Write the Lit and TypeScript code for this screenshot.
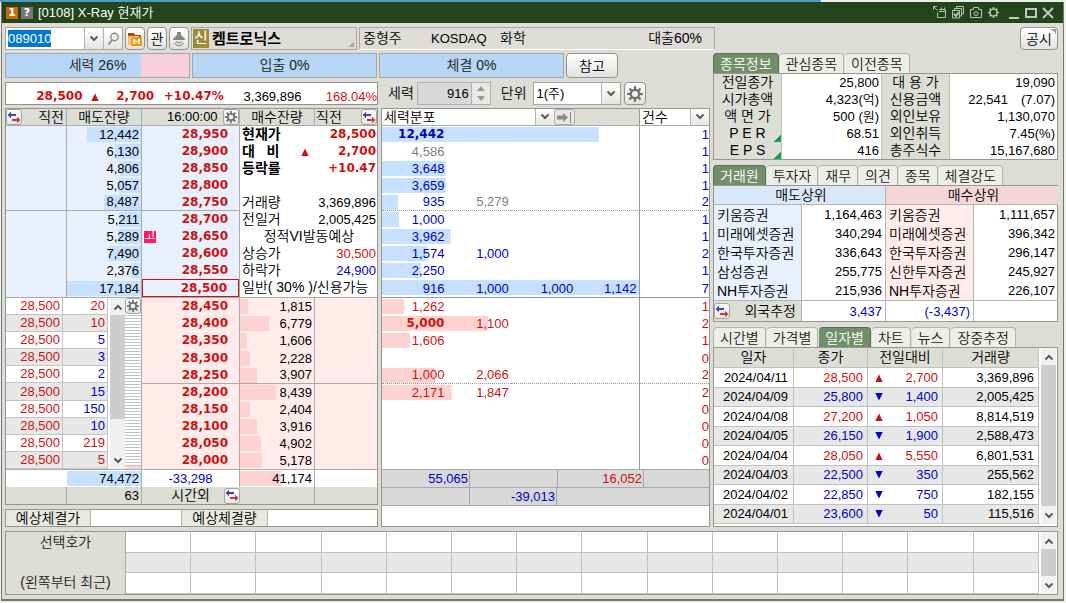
import { LitElement, html, css, svg, nothing } from "lit";
import { customElement, property } from "lit/decorators.js";
import { classMap } from "lit/directives/class-map.js";
import { styleMap } from "lit/directives/style-map.js";

type Side = "up" | "down";

const FULL_VOLUME = 17184;
const FULL_SPREAD = 14740;

const asks: [string, string][] = [
  ["12,442", "28,950"],
  ["6,130", "28,900"],
  ["4,806", "28,850"],
  ["5,057", "28,800"],
  ["8,487", "28,750"],
  ["5,211", "28,700"],
  ["5,289", "28,650"],
  ["7,490", "28,600"],
  ["2,376", "28,550"],
  ["17,184", "28,500"],
];

const bids: [string, string][] = [
  ["28,450", "1,815"],
  ["28,400", "6,779"],
  ["28,350", "1,606"],
  ["28,300", "2,228"],
  ["28,250", "3,907"],
  ["28,200", "8,439"],
  ["28,150", "2,404"],
  ["28,100", "3,916"],
  ["28,050", "4,902"],
  ["28,000", "5,178"],
];

const ticks: [string, Side][] = [
  ["20", "up"],
  ["10", "up"],
  ["5", "down"],
  ["3", "down"],
  ["2", "down"],
  ["15", "down"],
  ["150", "down"],
  ["10", "down"],
  ["219", "up"],
  ["5", "up"],
];

interface Spread {
  cells: string[];
  total: number;
  count: string;
  muted?: number[];
  strong?: boolean;
}

const askSpread: Spread[] = [
  { cells: ["12,442"], total: 12442, count: "1", strong: true },
  { cells: ["4,586"], total: 0, count: "1", muted: [0] },
  { cells: ["3,648"], total: 3648, count: "1" },
  { cells: ["3,659"], total: 3659, count: "1" },
  { cells: ["935", "5,279"], total: 935, count: "2", muted: [1] },
  { cells: ["1,000"], total: 1000, count: "1" },
  { cells: ["3,962"], total: 3962, count: "1" },
  { cells: ["1,574", "1,000"], total: 2574, count: "2" },
  { cells: ["2,250"], total: 2250, count: "1" },
  { cells: ["916", "1,000", "1,000", "1,142"], total: 17184, count: "7" },
];

const bidSpread: Spread[] = [
  { cells: ["1,262"], total: 1262, count: "1" },
  { cells: ["5,000", "1,100"], total: 6100, count: "2", strong: true },
  { cells: ["1,606"], total: 1606, count: "1" },
  { cells: [], total: 0, count: "0" },
  { cells: ["1,000", "2,066"], total: 3066, count: "2" },
  { cells: ["2,171", "1,847"], total: 4018, count: "2" },
  { cells: [], total: 0, count: "0" },
  { cells: [], total: 0, count: "0" },
  { cells: [], total: 0, count: "0" },
  { cells: [], total: 0, count: "0" },
];

const facts: [string, string, string, string][] = [
  ["전일종가", "25,800", "대 용 가", "19,090"],
  ["시가총액", "4,323(억)", "신용금액", "22,541\u2003(7.07)"],
  ["액 면 가", "500 (원)", "외인보유", "1,130,070"],
  ["P E R", "68.51", "외인취득", "7.45(%)"],
  ["E P S", "416", "총주식수", "15,167,680"],
];

const brokers: [string, string, string, string][] = [
  ["키움증권", "1,164,463", "키움증권", "1,111,657"],
  ["미래에셋증권", "340,294", "미래에셋증권", "396,342"],
  ["한국투자증권", "336,643", "한국투자증권", "296,147"],
  ["삼성증권", "255,775", "신한투자증권", "245,927"],
  ["NH투자증권", "215,936", "NH투자증권", "226,107"],
];

const daily: [string, string, Side, string, string][] = [
  ["2024/04/11", "28,500", "up", "2,700", "3,369,896"],
  ["2024/04/09", "25,800", "down", "1,400", "2,005,425"],
  ["2024/04/08", "27,200", "up", "1,050", "8,814,519"],
  ["2024/04/05", "26,150", "down", "1,900", "2,588,473"],
  ["2024/04/04", "28,050", "up", "5,550", "6,801,531"],
  ["2024/04/03", "22,500", "down", "350", "255,562"],
  ["2024/04/02", "22,850", "down", "750", "182,155"],
  ["2024/04/01", "23,600", "down", "50", "115,516"],
];

const toNumber = (text: string) => Number(text.replace(/,/g, ""));
const barWidth = (value: string) => `${Math.min(100, (toNumber(value) / FULL_VOLUME) * 100)}%`;

const base = css`
  * {
    box-sizing: border-box;
  }
  button,
  input,
  select {
    font: inherit;
    color: inherit;
    margin: 0;
    padding: 0;
    border: 0;
    border-radius: 0;
    background: none;
    outline: none;
    appearance: none;
    min-width: 0;
  }
  svg {
    display: block;
  }
`;

const chevron = (up = false) => html`<svg width="10" height="8" viewBox="0 0 10 8" aria-hidden="true">
  <path d=${up ? "M1.5 6.5 5 3 8.5 6.5" : "M1.5 1.5 5 5 8.5 1.5"} fill="none" stroke="#5c5c5c" stroke-width="2" />
</svg>`;

const gear = (small = false) => {
  const teeth = [0, 45, 90, 135, 180, 225, 270, 315];
  const size = small ? 14 : 18;
  return html`<svg width=${size} height=${size} viewBox="0 0 16 16" aria-hidden="true">
    ${teeth.map((a) => svg`<rect x="7" y="1" width="2" height="4" fill="#707070" transform="rotate(${a} 8 8)" />`)}
    <circle cx="8" cy="8" r="3.7" fill="#f4f4f4" stroke="#707070" stroke-width="2" />
  </svg>`;
};

const swap = () => html`<svg width="14" height="13" viewBox="0 0 14 13" aria-hidden="true">
  <path d="M0.5 4 4 0.8V3H9V5H4V7.2Z" fill="#3d43b8" />
  <path d="M13.5 9 10 5.8V8H5V10H10V12.2Z" fill="#c43a3a" />
</svg>`;

const marker = (side: Side) => html`<svg class="marker" width="8" height="8" viewBox="0 0 8 8" role="img" aria-label=${side === "up" ? "상승" : "하락"}>
  ${side === "up"
    ? svg`<path d="M4 0.5 7.7 8H0.3Z" fill="#d01010" />`
    : svg`<path d="M0.3 0H7.7L4 7.5Z" fill="#0000d0" />`}
</svg>`;

@customElement("tab-strip")
class TabStrip extends LitElement {
  @property({ type: Array }) tabs: string[] = [];
  @property({ type: Number }) active = 0;

  static styles = [
    base,
    css`
      :host {
        display: block;
      }
      .strip {
        display: flex;
        gap: 1px;
        height: 20px;
      }
      .tab {
        height: 20px;
        padding: 0 6px;
        border: 1px solid #b0b4ac;
        border-bottom: 0;
        border-left-width: 0;
        border-radius: 4px 4px 0 0;
        background: #ebefe8;
        color: #222;
        font-size: 14px;
        line-height: 18px;
        white-space: nowrap;
      }
      .tab:first-child {
        border-left-width: 1px;
      }
      .tab.on {
        background: #71906a;
        border-color: #5d6b58;
        color: #fff;
      }
    `,
  ];

  render() {
    return html`<div class="strip" role="tablist">
      ${this.tabs.map(
        (label, i) => html`<button
          role="tab"
          aria-selected=${i === this.active}
          class=${classMap({ tab: true, on: i === this.active })}
          @click=${() => (this.active = i)}
        >${label}</button>`,
      )}
    </div>`;
  }
}

@customElement("scroll-rail")
class ScrollRail extends LitElement {
  @property({ type: Number }) thumb = 50;

  static styles = [
    base,
    css`
      :host {
        display: flex;
        flex-direction: column;
        width: 15px;
        flex: none;
        background: #f0f0f0;
      }
      .step {
        height: 17px;
        display: grid;
        place-items: center;
        flex: none;
      }
      .lane {
        flex: 1;
        min-height: 0;
      }
      .thumb {
        background: #cdcdcd;
      }
    `,
  ];

  render() {
    return html`<button class="step" aria-label="위로">${chevron(true)}</button>
      <div class="lane"><div class="thumb" style=${styleMap({ height: `${this.thumb}%` })}></div></div>
      <button class="step" aria-label="아래로">${chevron()}</button>`;
  }
}

@customElement("app-root")
class AppRoot extends LitElement {
  static styles = [
    base,
    css`
      :host {
        display: block;
        min-height: 100vh;
        padding: 2px 2px 0 1px;
        background: linear-gradient(#4a9ccc, #4a9ccc) no-repeat 0 0 / 77% 2px, #eef0ee;
        font-family: "Liberation Sans", "Noto Sans CJK KR", sans-serif;
        font-size: 13px;
        font-weight: 350;
        line-height: 17px;
        color: #000;
        box-sizing: border-box;
      }
      .window {
        border: 1px solid #75776f;
        border-top: 0;
        border-bottom-width: 2px;
        background: #dddcd6;
      }
      .title {
        display: flex;
        align-items: center;
        gap: 3px;
        height: 21px;
        padding: 0 8px 0 4px;
        background: #24441b;
        color: #fff;
      }
      .title-text {
        flex: 1;
        margin: 0 0 0 2px;
        font-size: 13px;
        font-weight: inherit;
      }
      .chip {
        width: 12px;
        height: 12px;
        background: #c66a08;
        font: bold 11px/12px "DejaVu Sans", sans-serif;
        text-align: center;
      }
      .chip.help {
        background: #777;
      }
      .tool {
        display: grid;
        place-items: center;
        width: 15px;
        height: 17px;
      }
      .body {
        padding: 4px 5px 4px 3px;
      }
      .ko {
        font-size: 14px;
      }
      .up {
        color: #d01010;
      }
      .down {
        color: #0000c8;
      }
      .muted {
        color: #808080;
      }
      .strong {
        font: bold 12px/17px "DejaVu Sans", sans-serif;
      }
      .num {
        text-align: right;
      }

      .toolbar {
        display: flex;
        gap: 2px;
        height: 23px;
        margin-bottom: 3px;
      }
      .combo {
        display: flex;
        border: 1px solid #a6a6a2;
        background: #fff;
      }
      .code {
        width: 78px;
        padding-left: 2px;
      }
      .code::selection {
        background: #0078d7;
        color: #fff;
      }
      .arrow {
        display: grid;
        place-items: center;
        width: 19px;
        flex: none;
        border-left: 1px solid #b4b4b0;
        background: linear-gradient(#fff, #e4e4e2);
      }
      .btn {
        display: grid;
        place-items: center;
        border: 1px solid #92928e;
        border-radius: 4px;
        background: linear-gradient(#fff, #e2e2e0);
        font-size: 14px;
        line-height: 18px;
      }
      .square {
        width: 20px;
      }
      .stockname {
        display: flex;
        align-items: center;
        gap: 3px;
        width: 166px;
        padding: 0 1px;
        border: 1px solid #a6a6a2;
        font-size: 15px;
        font-weight: bold;
        background: linear-gradient(135deg, transparent 50%, #a8a8a4 50%) no-repeat right 2px bottom 2px / 5px 5px;
      }
      .credit {
        width: 16px;
        height: 19px;
        background: #9a8c34;
        color: #fff;
        font-size: 15px;
        font-weight: 400;
        line-height: 18px;
        text-align: center;
      }
      .market {
        display: flex;
        align-items: center;
        width: 356px;
        padding: 0 12px 0 3px;
        border: 1px solid #a6a6a2;
        border-bottom-color: #fff;
        font-size: 14px;
      }
      .market-size {
        width: 68px;
      }
      .market-name {
        width: 69px;
        font-size: 13px;
      }
      .market-loan {
        margin-left: auto;
      }
      .notice {
        width: 38px;
        margin-left: auto;
        background: linear-gradient(225deg, #a0a09c 50%, transparent 50%) no-repeat right 1px top 1px / 5px 5px,
          linear-gradient(#fff, #e2e2e0);
      }

      .desk {
        display: grid;
        grid-template-columns: minmax(0, 705fr) minmax(0, 345fr);
        gap: 3px;
      }
      .gauges {
        display: grid;
        grid-template-columns: 185fr 185fr 185fr 52fr 90fr;
        gap: 2px;
        height: 25px;
        margin-bottom: 4px;
      }
      .gauge {
        border: 1px solid #a6a6a2;
        background: #b7d5f4;
        color: #222;
        font-size: 14px;
        line-height: 22px;
        text-align: center;
      }
      .gauge.split {
        background: linear-gradient(90deg, #b7d5f4 74%, #f5d0dc 74%);
      }

      .books {
        display: grid;
        grid-template-columns: minmax(0, 373fr) minmax(0, 329fr);
        column-gap: 3px;
        row-gap: 3px;
      }
      .quote {
        display: grid;
        grid-template-columns: 77fr 24fr 48fr 70fr 78fr 76fr;
        align-items: center;
        height: 23px;
        padding-top: 5px;
        border: 1px solid #8f8f8b;
        background: #fff;
        text-align: right;
      }
      .quote .marker {
        margin: 0 auto;
      }
      .settings {
        display: flex;
        align-items: center;
        height: 23px;
        padding-left: 7px;
      }
      .settings label {
        font-size: 14px;
      }
      .amount {
        display: flex;
        height: 23px;
        margin: 0 10px 0 3px;
        border: 1px solid #b0b0ac;
        background: #d8d8d8;
      }
      .amount input {
        width: 53px;
        padding-right: 2px;
        text-align: right;
      }
      .spin {
        display: grid;
        width: 19px;
        border-left: 1px solid #b0b0ac;
        background: #e8e8e6;
      }
      .spin button {
        display: grid;
        place-items: center;
      }
      .unit {
        height: 23px;
        margin: 0 3px 0 6px;
      }
      .unit select {
        width: 67px;
        padding-left: 3px;
      }
      .settings .btn {
        width: 22px;
        height: 23px;
      }

      .panel {
        border: 1px solid #96968f;
        background: #fff;
      }
      table {
        width: 100%;
        table-layout: fixed;
        border-collapse: separate;
        border-spacing: 0;
      }
      th,
      td {
        padding: 0;
        height: 17px;
        font-weight: inherit;
        white-space: nowrap;
      }
      td.strong {
        font-weight: bold;
      }
      .head th {
        border-bottom: 1px solid #aaa;
        background: #dcddd4;
        font-size: 14px;
        line-height: 16px;
      }
      .line {
        border-right: 1px solid #aaa;
      }
      .ladder .c1 {
        width: 61px;
      }
      .ladder .c2,
      .ladder .c4 {
        width: 75px;
      }
      .ladder .c3 {
        width: 98px;
      }
      .ladder .c5 {
        width: 62px;
      }
      .split-head {
        display: flex;
        align-items: center;
        justify-content: space-between;
        height: 16px;
        padding-right: 2px;
      }
      .split-head.tail {
        padding: 0 0 0 1px;
      }
      .mini {
        display: grid;
        place-items: center;
        width: 16px;
        height: 16px;
        border: 1px solid #a4a4a0;
        border-radius: 3px;
        background: linear-gradient(#fff, #e6e6e4);
        flex: none;
      }
      .clock {
        font-size: 13px;
        padding-left: 24px;
      }
      .ask td {
        background-color: #e8f0fc;
      }
      .bid td {
        background-color: #ffecea;
      }
      .ask:nth-child(5) td:not(.info),
      .bid:nth-child(5) .rule {
        border-bottom: 1px solid #aaa;
      }
      .ask:nth-child(10) td {
        height: 19px;
        border-bottom: 1px solid #aaa;
      }
      .bid:nth-child(4) td {
        height: 18px;
      }
      .ladder .info {
        background: #fff;
        vertical-align: top;
        border-bottom: 1px solid #aaa;
      }
      .ladder .ticks {
        background: #fff;
        vertical-align: top;
      }
      .vol {
        display: grid;
        justify-items: end;
      }
      .vol > * {
        grid-area: 1 / 1;
      }
      .fill {
        height: 15px;
        margin-top: 1px;
        background: #c6e0ff;
      }
      .fill.buy {
        justify-self: start;
        background: #ffd2d2;
      }
      .vol-text {
        padding-right: 2px;
        z-index: 1;
      }
      .price {
        display: flex;
        justify-content: space-between;
        align-items: center;
        height: 17px;
        padding: 0 11px 0 2px;
      }
      .price.last {
        height: 18px;
        border: 1px solid #d01010;
      }
      tr:nth-child(5) .price {
        height: 16px;
      }
      tr:nth-child(5) .vol,
      tr:nth-child(5) .price .strong {
        line-height: 16px;
      }
      .price .strong {
        margin-left: auto;
      }
      .flag {
        width: 12px;
        height: 12px;
        background: #ff1a62;
        color: #fff;
        font-size: 12px;
        font-weight: 400;
        line-height: 10px;
        text-align: center;
      }
      .info-row {
        display: flex;
        align-items: center;
        justify-content: space-between;
        height: 17px;
        padding: 0 1px 0 2px;
      }
      .info-row b {
        font-size: 14px;
        font-weight: 700;
        white-space: pre;
      }
      .info-row .marker {
        margin-right: 8px;
      }
      .info-row .center {
        margin: 0 auto;
        font-size: 14px;
      }
      .tick-wrap {
        display: flex;
        height: 171px;
      }
      .tick-list {
        flex: 1;
        height: 171px;
      }
      .tick-list td {
        border-bottom: 1px solid #c4c4c4;
        border-right: 1px solid #c4c4c4;
        padding-right: 2px;
        line-height: 16px;
        background: #fff;
      }
      .tick-list tr:nth-child(even) td {
        background: #e7e7e7;
      }
      .tick-list .t1 {
        width: 57px;
      }
      .tick-list .t2 {
        width: 45px;
      }
      .tick-wrap scroll-rail {
        margin-left: 2px;
      }
      .stripes {
        display: flex;
        flex-direction: column;
        width: 17px;
        border-right: 1px solid #aaa;
        background: linear-gradient(#ffd0d4, #ffd0d4) no-repeat 0 100% / 100% 3px,
          repeating-linear-gradient(#fff 0 2px, #c4c4c4 2px 3px);
      }
      .sum td {
        height: 18px;
        border-top: 1px solid #aaa;
        background: #fff;
      }
      .after td {
        background: #dcddd4;
      }
      .mid {
        text-align: center;
      }
      .after-cell {
        display: flex;
        align-items: center;
        justify-content: flex-end;
        gap: 14px;
        height: 17px;
        font-size: 14px;
      }
      .expect {
        display: grid;
        grid-template-columns: 85fr 91fr 86fr 109fr;
        height: 18px;
        margin: 4px 0 0;
        line-height: 16px;
      }
      .expect dt {
        background: #e9e9e2;
        border-right: 1px solid #b4b4b0;
        font-size: 14px;
        text-align: center;
      }
      .expect dd {
        margin: 0;
        border-right: 1px solid #b4b4b0;
      }
      .expect dd:last-child {
        border-right: 0;
      }

      .spread-panel {
        display: flex;
        flex-direction: column;
      }
      .spread-head {
        display: flex;
        height: 17px;
        border-bottom: 1px solid #aaa;
        background: #dcddd4;
        line-height: 16px;
        font-size: 14px;
      }
      .pick {
        display: flex;
        background: #fff;
      }
      .pick select {
        flex: 1;
        padding-left: 2px;
        line-height: 16px;
      }
      .pick.wide {
        flex: 172;
      }
      .pick.thin {
        flex: 69;
      }
      .jump {
        display: grid;
        place-items: center;
        width: 21px;
        border: 1px solid #b0b0ac;
        border-radius: 3px;
        background: #e6e6e4;
      }
      .void {
        flex: 64;
        border-right: 1px solid #999;
      }
      .spread .s {
        width: 64px;
      }
      .spread .n {
        width: 69px;
      }
      .spread tr {
        --tone: #c6e0ff;
        background: linear-gradient(var(--tone), var(--tone)) no-repeat 0 1px / var(--bar) 15px;
      }
      .spread .buy {
        --tone: #ffd2d2;
      }
      .spread td {
        padding-right: 2px;
        text-align: right;
      }
      .spread td:nth-child(4) {
        border-right: 1px solid #999;
      }
      .spread td:last-child {
        padding-right: 0;
      }
      .spread tr:nth-child(10) td {
        height: 19px;
        border-bottom: 1px solid #999;
      }
      .spread tr:nth-child(14) td {
        height: 18px;
      }
      .spread tr:nth-child(5) td,
      .spread tr:nth-child(15) td {
        border-bottom: 1px dotted #999;
        line-height: 16px;
      }
      .net {
        display: grid;
        grid-template-columns: 88fr 87fr 87fr 65fr;
        grid-auto-rows: 18px;
        border-top: 1px solid #a8a8a8;
        background: #d8d8d8;
        text-align: right;
      }
      .net div {
        border-bottom: 1px solid #a8a8a8;
        padding-right: 1px;
      }
      .net .box {
        border-right: 1px solid #a8a8a8;
      }
      .net .boxed {
        border-left: 1px solid #a8a8a8;
      }

      .facts .f1,
      .facts .f3 {
        width: 68px;
      }
      .facts .f2 {
        width: 100px;
      }
      .facts .f4 {
        width: 107px;
      }
      .facts th {
        background: #dcddd4;
        border-right: 1px solid #c2c2bc;
        font-size: 14px;
      }
      .facts td {
        padding-right: 2px;
        text-align: right;
      }
      .facts .line {
        border-color: #c2c2bc;
      }
      .facts .more {
        background: linear-gradient(135deg, transparent 50%, #10a450 50%) no-repeat right bottom / 7px 7px, #dcddd4;
      }
      .block {
        margin-bottom: 5px;
      }
      .brokers .b1,
      .brokers .b3 {
        width: 88px;
      }
      .brokers .b2,
      .brokers .b4 {
        width: 84px;
      }
      .brokers th {
        height: 19px;
        text-align: left;
        font-size: 14px;
        padding-left: 3px;
        line-height: 18px;
      }
      .brokers td {
        height: 19px;
        padding-right: 3px;
        text-align: right;
        border-right: 1px solid #b4b4b4;
      }
      .brokers td:last-child {
        border-right: 0;
      }
      .brokers .sell {
        background: #e8f0fc;
        border-right: 1px solid #b4b4b4;
      }
      .brokers .buy {
        background: #ffecea;
        border-right: 1px solid #b4b4b4;
      }
      .brokers thead th {
        text-align: center;
        border-bottom: 1px solid #b4b4b4;
      }
      .brokers thead .sell {
        background: #d8e8f8;
      }
      .brokers thead .buy {
        background: #f5d6d8;
        border-right: 0;
      }
      .brokers tfoot th,
      .brokers tfoot td {
        height: 21px;
        border-top: 1px solid #b4b4b4;
      }
      .brokers tfoot th {
        padding: 0 5px 0 0;
        background: #dcddd4;
        border-right: 1px solid #b4b4b4;
      }
      .foreign {
        display: flex;
        align-items: center;
        justify-content: space-between;
      }
      .scroller {
        display: flex;
        gap: 2px;
        padding: 0 1px 2px 0;
      }
      .daily .d1 {
        width: 80px;
      }
      .daily .d2 {
        width: 74px;
      }
      .daily .d3 {
        width: 75px;
      }
      .daily .d4 {
        width: 96px;
      }
      .daily th,
      .daily td {
        height: 20px;
        border-right: 1px solid #c0c0c0;
        border-bottom: 1px solid #c0c0c0;
        line-height: 19px;
      }
      .daily tr:nth-child(even) td {
        height: 19px;
        background: #e7e7e7;
        line-height: 18px;
      }
      .daily td {
        padding-right: 4px;
        text-align: right;
      }
      .daily td:first-child {
        padding-right: 5px;
      }
      .change {
        display: flex;
        align-items: center;
        justify-content: space-between;
        padding-left: 7px;
      }
      .choices {
        display: flex;
        gap: 2px;
        margin-top: 4px;
        padding-right: 1px;
        height: 64px;
      }
      .choices .h {
        width: 120px;
      }
      .choices th {
        background: #dddcd6;
        border-right: 1px solid #aaa;
        color: #222;
        font-size: 14px;
        vertical-align: top;
      }
      .choice-labels {
        display: flex;
        flex-direction: column;
        justify-content: space-between;
        height: 61px;
        padding: 2px 0;
      }
      .choices td {
        height: 20px;
        border-right: 1px solid #c0c0c0;
        border-bottom: 1px solid #c0c0c0;
      }
      .choices tr:nth-child(2) td {
        background: #e7e7e7;
      }
    `,
  ];

  firstUpdated() {
    const code = this.renderRoot.querySelector<HTMLInputElement>(".code");
    code?.focus({ preventScroll: true });
    code?.select();
  }

  private titleBar() {
    return html`<header class="title">
      <span class="chip">1</span><span class="chip help">?</span>
      <h1 class="title-text">[0108] X-Ray 현재가</h1>
      <button class="tool" aria-label="분리">
        <svg width="14" height="13" viewBox="0 0 14 13" fill="none" stroke="#b9bfb4">
          <path d="M4.5 6.5V11.5H12.5V3.5H6M6 5.5H12.5M8.5 1.5V3M11.5 1.5V3M1 1 4.5 4.5M0.5 4V0.5H4" />
        </svg>
      </button>
      <button class="tool" aria-label="복사">
        <svg width="14" height="13" viewBox="0 0 14 13" fill="none" stroke="#b9bfb4">
          <path d="M1.5 4.5H8.5V12H1.5ZM3.5 4.5V2.5H10.5V10H8.5M5.5 2.5V0.5H12.5V8H10.5" />
          <path d="M3 7.5 5 10 8 6" stroke-width="2" />
        </svg>
      </button>
      <button class="tool" aria-label="화면 저장">
        <svg width="14" height="13" viewBox="0 0 14 13" fill="none" stroke="#b9bfb4">
          <path d="M1.5 3.5H4.5V1.5H9.5V3.5H12.5V11.5H1.5Z" /><circle cx="7" cy="7.5" r="2" />
        </svg>
      </button>
      <button class="tool" aria-label="설정">
        <svg width="13" height="13" viewBox="0 0 13 13" fill="none" stroke="#b9bfb4">
          <circle cx="6.5" cy="6.5" r="3.5" stroke-width="1.6" />
          <path d="M6.5 1V3M6.5 10V12M1 6.5H3M10 6.5H12M2.6 2.6 4 4M9 9 10.4 10.4M2.6 10.4 4 9M9 4 10.4 2.6" stroke-width="1.6" />
        </svg>
      </button>
      <button class="tool" aria-label="최소화">
        <svg width="14" height="12" viewBox="0 0 14 12"><path d="M4 11H14" stroke="#c2c8be" stroke-width="2" /></svg>
      </button>
      <button class="tool" aria-label="최대화">
        <svg width="14" height="12" viewBox="0 0 14 12"><path d="M3 2H13V10H3Z" fill="none" stroke="#c2c8be" stroke-width="2" /></svg>
      </button>
      <button class="tool" aria-label="닫기">
        <svg width="12" height="12" viewBox="0 0 12 12"><path d="M1 1 11 11M11 1 1 11" stroke="#c2c8be" stroke-width="2" /></svg>
      </button>
    </header>`;
  }

  private toolbar() {
    return html`<div class="toolbar">
      <div class="combo">
        <input class="code" aria-label="종목코드" .value=${"089010"} />
        <button class="arrow" aria-label="목록">${chevron()}</button>
        <button class="arrow" aria-label="종목 검색">
          <svg width="13" height="14" viewBox="0 0 13 14" fill="none" stroke="#8c8c86">
            <circle cx="7.5" cy="5" r="3.7" stroke-width="1.4" /><path d="M5 8 1.5 12.5" stroke-width="2" />
          </svg>
        </button>
      </div>
      <button class="btn square" aria-label="보유종목">
        <svg width="16" height="16" viewBox="0 0 16 16">
          <path d="M1 2H7L8 4H14V8H1Z" fill="#a85008" /><path d="M1 5H12V14H2Q1 14 1 13Z" fill="#f0c27a" />
          <path d="M4 6H15V14Q15 15 14 15H4Z" fill="#f59a10" /><path d="M7 8V13M12 8V13M7 10.5H12" stroke="#fff" stroke-width="1.6" />
        </svg>
      </button>
      <button class="btn square">관</button>
      <button class="btn square" aria-label="알림">
        <svg width="14" height="16" viewBox="0 0 14 16" fill="none" stroke="#99998f">
          <path d="M5 1H9V4L13 8V9H1V8L5 4Z" fill="#88887e" stroke="none" /><path d="M4 10.5Q7 13 10 10.5M2.5 12Q7 17.5 11.5 12" stroke-width="1.3" />
        </svg>
      </button>
      <div class="stockname"><span class="credit">신</span>켐트로닉스</div>
      <div class="market">
        <span class="market-size">중형주</span><span class="market-name">KOSDAQ</span><span>화학</span>
        <span class="market-loan">대출60%</span>
      </div>
      <button class="btn notice">공시</button>
    </div>`;
  }

  private askRow([volume, price]: [string, string], i: number) {
    const last = i === asks.length - 1;
    return html`<tr class="ask">
      <td class="line"></td>
      <td class="line">
        <div class="vol"><div class="fill" style=${styleMap({ width: barWidth(volume) })}></div><span class="vol-text">${volume}</span></div>
      </td>
      <td class="line">
        <div class=${classMap({ price: true, last })}>
          ${i === 6 ? html`<span class="flag">고</span>` : nothing}<span class="strong up">${price}</span>
        </div>
      </td>
      ${i === 0 ? html`<td class="info" colspan="2" rowspan="10">${this.info()}</td>` : nothing}
    </tr>`;
  }

  private info() {
    return html`
      <div class="info-row"><b>현재가</b><span class="strong up">28,500</span></div>
      <div class="info-row"><b>대   비</b>${marker("up")}<span class="strong up">2,700</span></div>
      <div class="info-row"><b>등락률</b><span class="strong up">+10.47</span></div>
      <div class="info-row"></div>
      <div class="info-row"><span class="ko">거래량</span><span>3,369,896</span></div>
      <div class="info-row"><span class="ko">전일거</span><span>2,005,425</span></div>
      <div class="info-row"><span class="center">정적VI발동예상</span></div>
      <div class="info-row"><span class="ko">상승가</span><span class="up">30,500</span></div>
      <div class="info-row"><span class="ko">하락가</span><span class="down">24,900</span></div>
      <div class="info-row"><span class="ko">일반( 30% )/신용가능</span></div>
    `;
  }

  private tickList() {
    return html`<div class="tick-wrap">
      <table class="tick-list">
        <colgroup><col class="t1" /><col class="t2" /></colgroup>
        <tbody>
          ${ticks.map(([qty, side]) => html`<tr><td class="num up">28,500</td><td class="num ${side}">${qty}</td></tr>`)}
        </tbody>
      </table>
      <scroll-rail .thumb=${76}></scroll-rail>
      <div class="stripes"><button class="mini" aria-label="체결 설정">${gear(true)}</button></div>
    </div>`;
  }

  private ladder() {
    return html`<div>
      <div class="panel">
        <table class="ladder">
          <colgroup><col class="c1" /><col class="c2" /><col class="c3" /><col class="c4" /><col class="c5" /></colgroup>
          <thead class="head">
            <tr>
              <th class="line"><div class="split-head"><button class="mini" aria-label="전환">${swap()}</button>직전</div></th>
              <th class="line">매도잔량</th>
              <th class="line"><div class="split-head tail"><span class="clock">16:00:00</span><button class="mini" aria-label="호가 설정">${gear(true)}</button></div></th>
              <th class="line">매수잔량</th>
              <th><div class="split-head tail">직전<button class="mini" aria-label="전환">${swap()}</button></div></th>
            </tr>
          </thead>
          <tbody>${asks.map((row, i) => this.askRow(row, i))}</tbody>
          <tbody>
            ${bids.map(
              ([price, volume], i) => html`<tr class="bid">
                ${i === 0 ? html`<td class="ticks" colspan="2" rowspan="10">${this.tickList()}</td>` : nothing}
                <td class="line rule"><div class="price"><span class="strong up">${price}</span></div></td>
                <td class="line rule">
                  <div class="vol"><div class="fill buy" style=${styleMap({ width: barWidth(volume) })}></div><span class="vol-text">${volume}</span></div>
                </td>
                <td class="rule"></td>
              </tr>`,
            )}
          </tbody>
          <tfoot>
            <tr class="sum">
              <td></td>
              <td class="line"><div class="vol"><div class="fill" style=${styleMap({ width: "100%" })}></div><span class="vol-text">74,472</span></div></td>
              <td class="line mid down">-33,298</td>
              <td class="line"><div class="vol"><div class="fill buy" style=${styleMap({ width: "55%" })}></div><span class="vol-text">41,174</span></div></td>
              <td></td>
            </tr>
            <tr class="after">
              <td class="line"></td>
              <td class="line"><div class="vol"><span class="vol-text">63</span></div></td>
              <td><div class="after-cell">시간외<button class="mini" aria-label="시간외 전환">${swap()}</button></div></td>
              <td class="line"></td>
              <td></td>
            </tr>
          </tfoot>
        </table>
      </div>
      <dl class="panel expect"><dt>예상체결가</dt><dd></dd><dt>예상체결량</dt><dd></dd></dl>
    </div>`;
  }

  private spreadRow(row: Spread, side: Side) {
    const bar = Math.min(1, row.total / FULL_SPREAD) * (257 / 327) * 100;
    return html`<tr class=${side === "up" ? "buy" : "sell"} style=${styleMap({ "--bar": `${bar}%` })}>
      ${[0, 1, 2, 3].map(
        (i) => html`<td class=${classMap({ [side]: !row.muted?.includes(i), muted: !!row.muted?.includes(i), strong: !!row.strong && i === 0 })}>${row.cells[i] ?? ""}</td>`,
      )}
      <td class=${side}>${row.count}</td>
    </tr>`;
  }

  private spread() {
    return html`<div class="panel spread-panel">
      <div class="spread-head">
        <div class="pick wide"><select aria-label="분포 기준"><option>세력분포</option></select><span class="arrow">${chevron()}</span></div>
        <button class="jump" aria-label="끝으로">
          <svg width="17" height="11" viewBox="0 0 17 11"><path d="M1 3.5H7V1L12 5.5 7 10V7.5H1Z" fill="#8a8a86" /><path d="M14.5 0V11" stroke="#8a8a86" /></svg>
        </button>
        <div class="void"></div>
        <div class="pick thin"><select aria-label="표시 값"><option>건수</option></select><span class="arrow">${chevron()}</span></div>
      </div>
      <table class="spread">
        <colgroup><col class="s" /><col class="s" /><col class="s" /><col class="s" /><col class="n" /></colgroup>
        <tbody>
          ${askSpread.map((r) => this.spreadRow(r, "down"))}${bidSpread.map((r) => this.spreadRow(r, "up"))}
        </tbody>
      </table>
      <div class="net">
        <div class="box down">55,065</div><div></div><div class="box boxed up">16,052</div><div></div>
        <div class="box"></div><div class="box down">-39,013</div><div></div><div></div>
      </div>
    </div>`;
  }

  private stockFacts() {
    return html`<tab-strip .tabs=${["종목정보", "관심종목", "이전종목"]}></tab-strip>
      <div class="panel block">
        <table class="facts">
          <colgroup><col class="f1" /><col class="f2" /><col class="f3" /><col class="f4" /></colgroup>
          <tbody>
            ${facts.map(
              ([a, b, c, d], i) => html`<tr>
                <th class=${classMap({ more: i > 2 })}>${a}</th><td class="line">${b}</td><th>${c}</th><td>${d}</td>
              </tr>`,
            )}
          </tbody>
        </table>
      </div>`;
  }

  private brokerTable() {
    return html`<tab-strip .tabs=${["거래원", "투자자", "재무", "의견", "종목", "체결강도"]}></tab-strip>
      <div class="panel block">
        <table class="brokers">
          <colgroup><col class="b1" /><col class="b2" /><col class="b3" /><col class="b4" /></colgroup>
          <thead><tr><th class="sell" colspan="2">매도상위</th><th class="buy" colspan="2">매수상위</th></tr></thead>
          <tbody>
            ${brokers.map(([a, b, c, d]) => html`<tr><th class="sell">${a}</th><td>${b}</td><th class="buy">${c}</th><td>${d}</td></tr>`)}
          </tbody>
          <tfoot>
            <tr>
              <th><div class="foreign"><button class="mini" aria-label="외국계 전환">${swap()}</button>외국추정</div></th>
              <td class="down">3,437</td><td class="down">(-3,437)</td><td></td>
            </tr>
          </tfoot>
        </table>
      </div>`;
  }

  private dailyTable() {
    return html`<tab-strip .tabs=${["시간별", "가격별", "일자별", "차트", "뉴스", "장중추정"]} .active=${2}></tab-strip>
      <div class="panel scroller">
        <table class="daily">
          <colgroup><col class="d1" /><col class="d2" /><col class="d3" /><col class="d4" /></colgroup>
          <thead class="head"><tr><th>일자</th><th>종가</th><th>전일대비</th><th>거래량</th></tr></thead>
          <tbody>
            ${daily.map(
              ([date, close, side, diff, volume]) => html`<tr>
                <td>${date}</td><td class=${side}>${close}</td>
                <td class=${side}><div class="change">${marker(side)}${diff}</div></td><td>${volume}</td>
              </tr>`,
            )}
          </tbody>
        </table>
        <scroll-rail .thumb=${99}></scroll-rail>
      </div>`;
  }

  render() {
    const blanks = Array.from({ length: 14 });
    return html`<main class="window">
      ${this.titleBar()}
      <div class="body">
        ${this.toolbar()}
        <div class="desk">
          <section>
            <div class="gauges">
              <div class="gauge split">세력 26%</div><div class="gauge">입출 0%</div><div class="gauge">체결 0%</div>
              <button class="btn">참고</button>
            </div>
            <div class="books">
              <div class="quote">
                <span class="strong up">28,500</span>${marker("up")}<span class="strong up">2,700</span>
                <span class="strong up">+10.47%</span><span>3,369,896</span><span class="up">168.04%</span>
              </div>
              <div class="settings">
                <label for="force">세력</label>
                <div class="amount">
                  <input id="force" .value=${"916"} />
                  <div class="spin">
                    <button aria-label="증가"><svg width="8" height="5" viewBox="0 0 8 5"><path d="M4 0 8 5H0Z" fill="#999" /></svg></button>
                    <button aria-label="감소"><svg width="8" height="5" viewBox="0 0 8 5"><path d="M0 0H8L4 5Z" fill="#999" /></svg></button>
                  </div>
                </div>
                <label for="unit">단위</label>
                <div class="combo unit">
                  <select id="unit"><option>1(주)</option></select><span class="arrow">${chevron()}</span>
                </div>
                <button class="btn" aria-label="세력 설정">${gear()}</button>
              </div>
              ${this.ladder()} ${this.spread()}
            </div>
          </section>
          <section>${this.stockFacts()} ${this.brokerTable()} ${this.dailyTable()}</section>
        </div>
        <div class="panel choices">
          <table>
            <colgroup><col class="h" />${blanks.map(() => html`<col />`)}</colgroup>
            <tbody>
              ${[0, 1, 2].map(
                (r) => html`<tr>
                  ${r === 0 ? html`<th rowspan="3"><div class="choice-labels"><span>선택호가</span><span>(왼쪽부터 최근)</span></div></th>` : nothing}
                  ${blanks.map(() => html`<td></td>`)}
                </tr>`,
              )}
            </tbody>
          </table>
          <scroll-rail .thumb=${98}></scroll-rail>
        </div>
      </div>
    </main>`;
  }
}
